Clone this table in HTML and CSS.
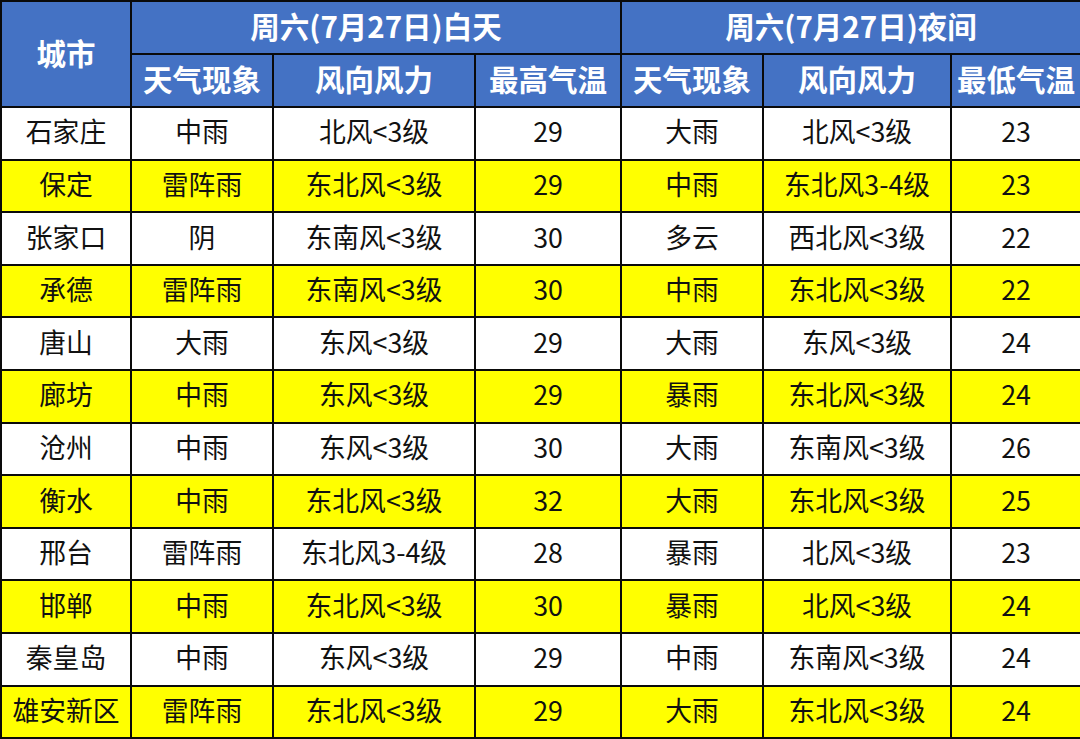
FILE: index.html
```html
<!DOCTYPE html>
<html lang="zh-CN">
<head>
<meta charset="utf-8">
<title>河北天气预报</title>
<link rel="stylesheet" href="styles.css">
</head>
<body>
<table class="wx">
  <colgroup>
    <col class="c-city">
    <col class="c-wx">
    <col class="c-wind">
    <col class="c-temp">
    <col class="c-wx">
    <col class="c-wind2">
    <col class="c-temp2">
  </colgroup>
  <thead>
    <tr>
      <th rowspan="2">城市</th>
      <th colspan="3">周六(7月27日)白天</th>
      <th colspan="3">周六(7月27日)夜间</th>
    </tr>
    <tr>
      <th>天气现象</th><th>风向风力</th><th>最高气温</th>
      <th>天气现象</th><th>风向风力</th><th>最低气温</th>
    </tr>
  </thead>
  <tbody>
    <tr><td>石家庄</td><td>中雨</td><td>北风&lt;3级</td><td>29</td><td>大雨</td><td>北风&lt;3级</td><td>23</td></tr>
    <tr class="hl"><td>保定</td><td>雷阵雨</td><td>东北风&lt;3级</td><td>29</td><td>中雨</td><td>东北风3-4级</td><td>23</td></tr>
    <tr><td>张家口</td><td>阴</td><td>东南风&lt;3级</td><td>30</td><td>多云</td><td>西北风&lt;3级</td><td>22</td></tr>
    <tr class="hl"><td>承德</td><td>雷阵雨</td><td>东南风&lt;3级</td><td>30</td><td>中雨</td><td>东北风&lt;3级</td><td>22</td></tr>
    <tr><td>唐山</td><td>大雨</td><td>东风&lt;3级</td><td>29</td><td>大雨</td><td>东风&lt;3级</td><td>24</td></tr>
    <tr class="hl"><td>廊坊</td><td>中雨</td><td>东风&lt;3级</td><td>29</td><td>暴雨</td><td>东北风&lt;3级</td><td>24</td></tr>
    <tr><td>沧州</td><td>中雨</td><td>东风&lt;3级</td><td>30</td><td>大雨</td><td>东南风&lt;3级</td><td>26</td></tr>
    <tr class="hl"><td>衡水</td><td>中雨</td><td>东北风&lt;3级</td><td>32</td><td>大雨</td><td>东北风&lt;3级</td><td>25</td></tr>
    <tr><td>邢台</td><td>雷阵雨</td><td>东北风3-4级</td><td>28</td><td>暴雨</td><td>北风&lt;3级</td><td>23</td></tr>
    <tr class="hl"><td>邯郸</td><td>中雨</td><td>东北风&lt;3级</td><td>30</td><td>暴雨</td><td>北风&lt;3级</td><td>24</td></tr>
    <tr><td>秦皇岛</td><td>中雨</td><td>东风&lt;3级</td><td>29</td><td>中雨</td><td>东南风&lt;3级</td><td>24</td></tr>
    <tr class="hl"><td>雄安新区</td><td>雷阵雨</td><td>东北风&lt;3级</td><td>29</td><td>大雨</td><td>东北风&lt;3级</td><td>24</td></tr>
  </tbody>
</table>
</body>
</html>
```

FILE: styles.css
```css
html, body {
  margin: 0;
  padding: 0;
  background: #ffffff;
}

.wx {
  width: 1080px;
  height: 739px;
  border-collapse: collapse;
  table-layout: fixed;
  font-family: "Noto Sans CJK SC", "Microsoft YaHei", "Noto Sans", sans-serif;
  color: #111111;
}

.c-city { width: 130px; }
.c-wx { width: 142px; }
.c-wind { width: 202px; }
.c-temp { width: 146px; }
.c-wind2 { width: 188px; }
.c-temp2 { width: 130px; }

.wx th,
.wx td {
  border: 2px solid #0a0a0a;
  padding: 0 0 3px;
  text-align: center;
  vertical-align: middle;
  line-height: 1;
  white-space: nowrap;
  overflow: hidden;
}

.wx thead tr {
  height: 53px;
}

.wx tbody tr {
  height: 52.6px;
}

.wx th {
  background: #4472c4;
  color: #ffffff;
  font-weight: 700;
  font-size: 29.5px;
}

.wx td {
  font-size: 26.8px;
  font-weight: 400;
  background: #ffffff;
}

.wx tr.hl td {
  background: #ffff00;
}
```
